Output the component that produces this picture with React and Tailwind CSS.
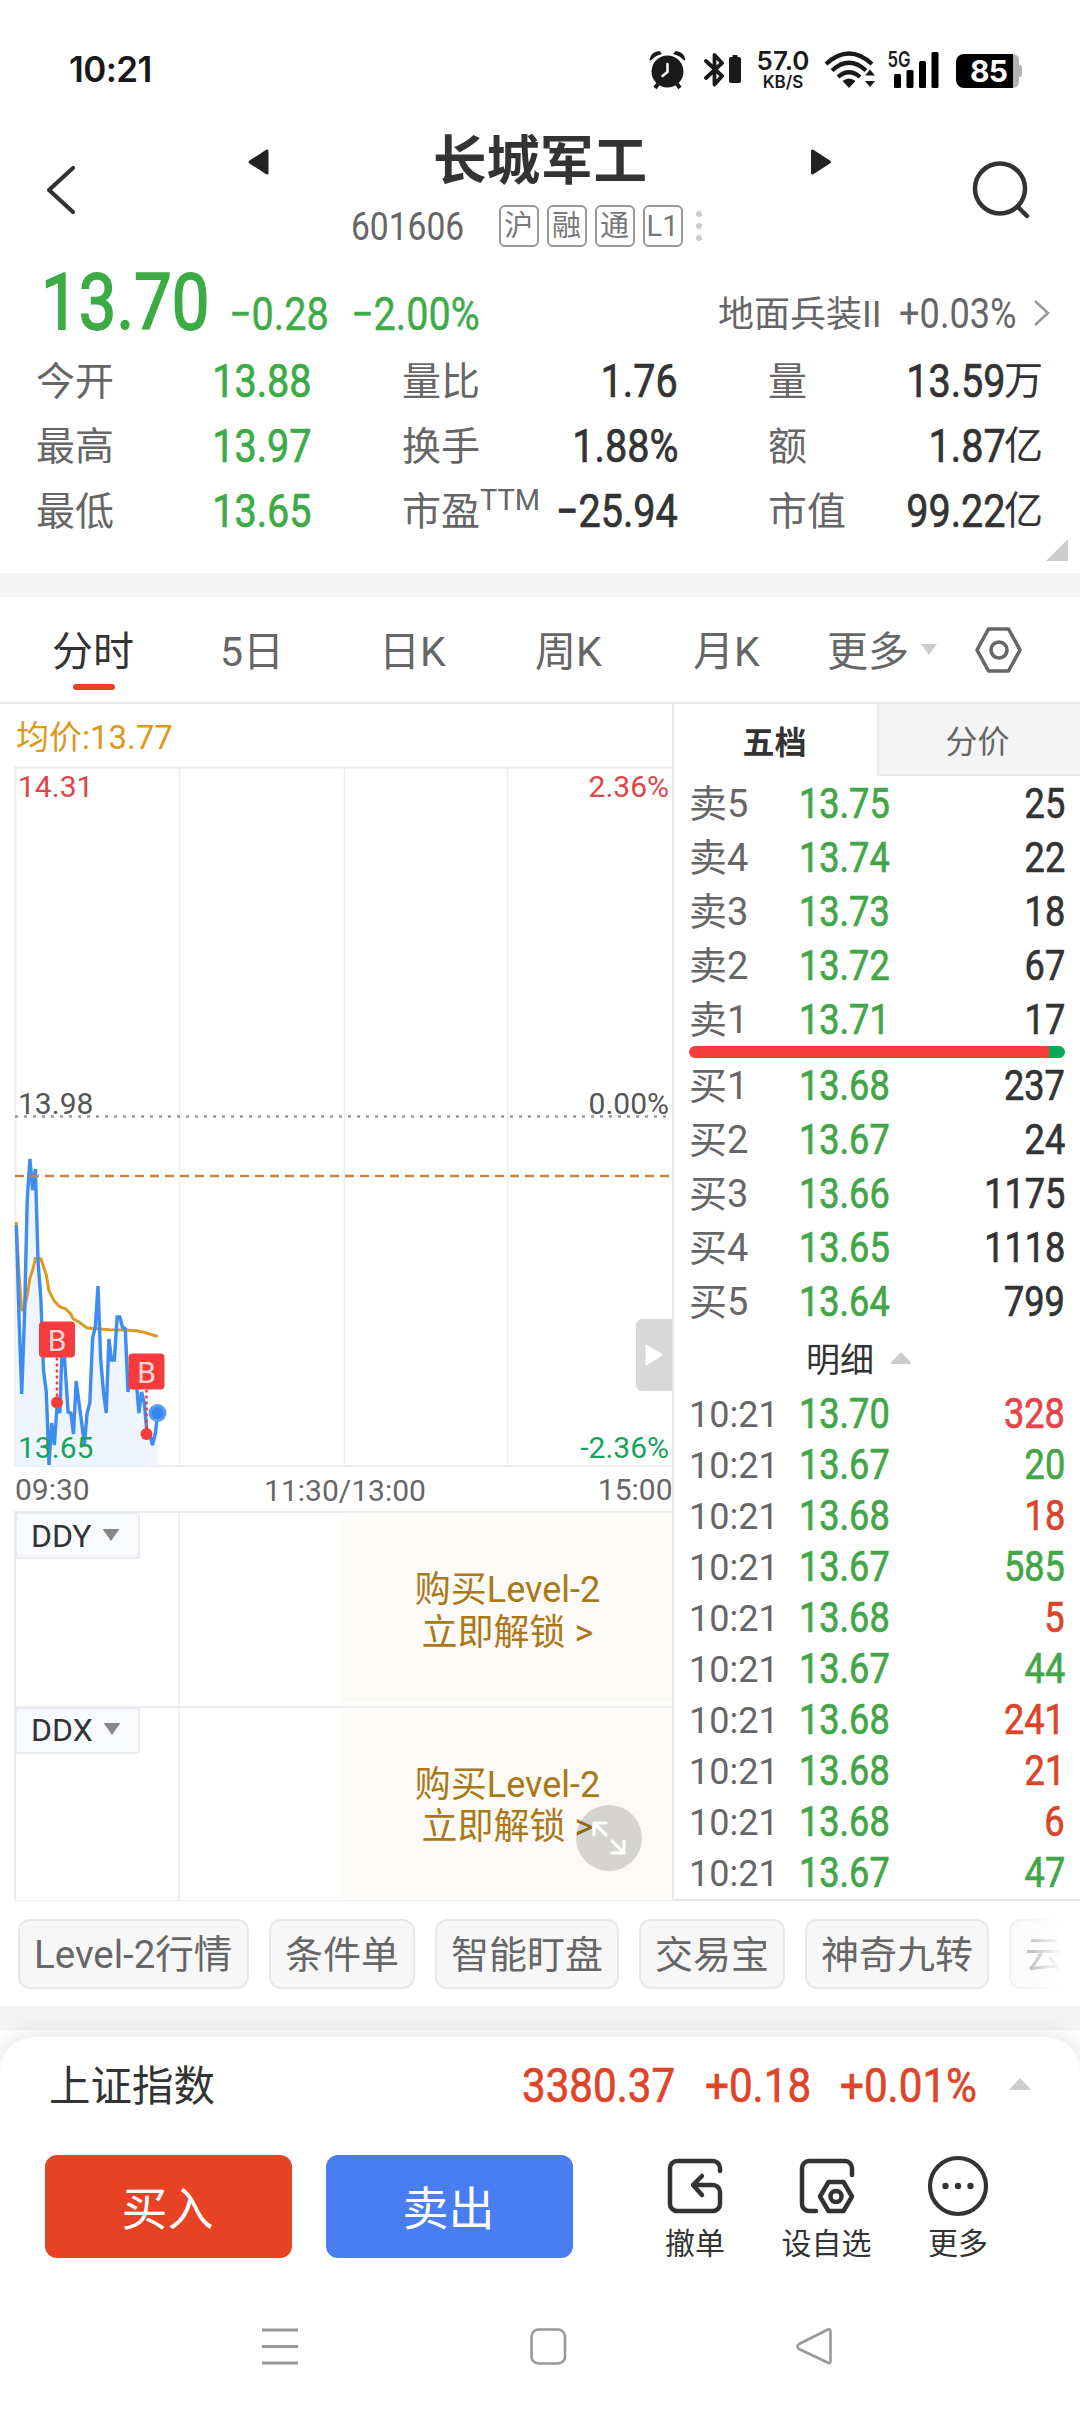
import React from 'react';
import clsx from 'clsx';

// Narrow numerals used for every price and volume
const Num = ({ children, className }) => (
  <span className={clsx('inline-block scale-x-[0.86] whitespace-nowrap leading-none [-webkit-text-stroke:0.7px_currentColor]', className)}>
    {children}
  </span>
);

const StatusBar = () => (
  <div className="flex h-[130px] items-start pl-[69px] pr-[58px] pt-[50px] text-[#1a1a1a]">
    <span className="-mt-px font-['Inter'] text-[35px] font-semibold leading-[40px] tracking-[-0.6px]">10:21</span>
    <div className="ml-auto flex h-10 items-start">
      {/* Alarm */}
      <svg className="h-10 w-[38px]" viewBox="0 0 38 40">
        <circle cx="18.5" cy="21.5" r="16" fill="#1a1a1a" />
        <path d="M0.5 10a10 10 0 0 1 10-9L13 4A20 20 0 0 0 2 10.500ZM36.500 10a10 10 0 0 0-10-9L24 4a20 20 0 0 1 11 6.500Z" fill="#1a1a1a" />
        <path d="M9 34l-3 4M28 34l3 4" stroke="#1a1a1a" strokeWidth="4" />
        <path d="M18.500 14v8l-5 4" fill="none" stroke="#fff" strokeWidth="2.500" strokeLinecap="round" />
      </svg>
      {/* Bluetooth with device battery */}
      <svg className="ml-[17px] h-10 w-[38px]" viewBox="0 0 38 40">
        <path d="M2 11l16 15-7.500 8.500V5L18 13 2 28" fill="none" stroke="#1a1a1a" strokeWidth="3.800" strokeLinejoin="round" strokeLinecap="round" />
        <path d="M28.500 5h5v2H35a2 2 0 0 1 2 2v22a2 2 0 0 1-2 2h-8a2 2 0 0 1-2-2V9a2 2 0 0 1 2-2h1.500Z" fill="#1a1a1a" />
      </svg>
      <div className="-mt-[2px] ml-[12px] flex w-[58px] flex-col items-center font-['Inter'] font-semibold">
        <span className="text-[26px] leading-[26px]">57.0</span>
        <span className="text-[17px] leading-[17px]">KB/S</span>
      </div>
      {/* Wifi */}
      <svg className="ml-[12px] h-10 w-[52px]" viewBox="0 0 52 40">
        <g fill="none" stroke="#1a1a1a" strokeWidth="4.200">
          <path d="M2 14Q25 -7 48 14" />
          <path d="M8 20.500Q25 5 42 20.500" />
          <path d="M14 27Q25 17.500 36 27" />
        </g>
        <path d="M18.500 31Q25 26 31.500 31L25 38ZM41 25.500l5-6 5 6ZM41 31l5 6 5-6Z" fill="#1a1a1a" />
      </svg>
      {/* Cellular signal */}
      <svg className="ml-[11px] h-10 w-[54px] overflow-visible" viewBox="0 0 54 40">
        <text x="0.5" y="17" textLength="23" lengthAdjust="spacingAndGlyphs" fontFamily="Inter, sans-serif" fontSize="21" fontWeight="600" fill="#1a1a1a">5G</text>
        <rect x="7" y="24" width="7" height="14" rx="1.500" />
        <rect x="19.500" y="20" width="7" height="18" rx="1.500" />
        <rect x="32" y="11" width="7" height="27" rx="1.500" />
        <rect x="44.500" y="2" width="7" height="36" rx="1.500" />
      </svg>
      {/* Battery */}
      <div className="ml-[15px] mt-1 flex items-center">
        <div className="flex h-[34px] w-[57px] items-center justify-center rounded-l-[8px] bg-black pl-2 font-['Inter'] text-[30px] font-bold leading-none tracking-[-0.8px] text-white">
          85
        </div>
        <div className="h-[34px] w-[6px] rounded-r-[8px] bg-[#b3b3b3]" />
        <div className="h-[12px] w-[3px] rounded-r-sm bg-[#b3b3b3]" />
      </div>
    </div>
  </div>
);

const badges = ['沪', '融', '通', 'L1'];

const Header = () => (
  <div className="flex h-[120px] items-start">
    <svg className="ml-[43px] mt-[34px] h-[52px] w-9" viewBox="0 0 36 52">
      <path d="M30 4L6 26l24 22" fill="none" stroke="#333" strokeWidth="4.200" strokeLinecap="round" strokeLinejoin="round" />
    </svg>
    <svg className="ml-[168px] mt-[18px] h-7 w-6" viewBox="0 0 24 28">
      <path d="M20 3v22L3 14Z" fill="#222" stroke="#222" strokeWidth="3" strokeLinejoin="round" />
    </svg>
    <div className="flex w-[538px] flex-col items-center pt-[2px]">
      <h1 className="text-[53.500px] font-bold leading-[60px] text-[#333]">长城军工</h1>
      <div className="mt-[13px] flex h-[42px] items-center pr-[28px]">
        <div className="w-[148px] pt-[2px] text-[#666]">
          <Num className="origin-left text-[39px] [-webkit-text-stroke:0px]!">601606</Num>
        </div>
        <div className="flex gap-2">
          {badges.map((badge) => (
            <span key={badge} className="flex h-[42px] w-10 items-center justify-center rounded-[6px] border-2 border-[#999] text-[29px] leading-none text-[#777]">
              {badge}
            </span>
          ))}
        </div>
        <div className="ml-[13px] flex flex-col gap-[6px]">
          <i className="size-[6px] rounded-full bg-[#ccc]" />
          <i className="size-[6px] rounded-full bg-[#ccc]" />
          <i className="size-[6px] rounded-full bg-[#ccc]" />
        </div>
      </div>
    </div>
    <svg className="mt-[18px] h-7 w-6" viewBox="0 0 24 28">
      <path d="M3.500 3v22L20.500 14Z" fill="#222" stroke="#222" strokeWidth="3" strokeLinejoin="round" />
    </svg>
    <svg className="ml-[137px] mt-[28px] size-[64px]" viewBox="0 0 64 64">
      <circle cx="30" cy="30.500" r="25" fill="none" stroke="#333" strokeWidth="4.500" />
      <path d="M48 49l9 9" stroke="#333" strokeWidth="4.500" strokeLinecap="round" />
    </svg>
  </div>
);

const stats = [
  ['今开', '13.88', '量比', '1.76', '量', '13.59', '万'],
  ['最高', '13.97', '换手', '1.88%', '额', '1.87', '亿'],
  ['最低', '13.65', '市盈', '-25.94', '市值', '99.22', '亿'],
];

const Quote = () => (
  <div className="relative h-[323px]">
    <div className="flex h-[97px] items-center text-[#3cab46]">
      <div className="w-[184px] pl-[41px]">
        <Num className="mt-[9px] origin-left text-[78px] [-webkit-text-stroke:1.8px_currentColor]!">13.70</Num>
      </div>
      <div className="flex w-[500px] pl-[45px] pt-[31px] text-[46px]">
        <Num className="w-[122px] origin-left [-webkit-text-stroke:0.4px_currentColor]!">−0.28</Num>
        <Num className="origin-left [-webkit-text-stroke:0.4px_currentColor]!">−2.00%</Num>
      </div>
      <div className="ml-auto flex items-center pr-7 pt-[32px] text-[#666]">
        <span className="mr-[-2px] text-[36px] leading-none">地面兵装II</span>
        <Num className="-mt-[2px] origin-right text-[42px] [-webkit-text-stroke:0px]!">+0.03%</Num>
        <svg className="-mt-[3px] ml-4 h-[30px] w-5" viewBox="0 0 20 30">
          <path d="M3 3l13 12L3 27" fill="none" stroke="#999" strokeWidth="2.500" />
        </svg>
      </div>
    </div>
    {stats.map(([l1, v1, l2, v2, l3, v3, unit]) => (
      <div key={l1} className="flex h-[65px] items-center text-[39px] leading-none text-[#666]">
        <span className="w-[140px] pl-9 pt-[6px]">{l1}</span>
        <div className="flex w-[172px] justify-end pt-[2px] text-[#3cab46]">
          <Num className="origin-right text-[46px]">{v1}</Num>
        </div>
        <span className="ml-[90px] flex w-[140px] pt-[6px]">
          {l2}
          {l2 === '市盈' && <sup className="top-0 -mt-[7px] text-[29px] leading-none">TTM</sup>}
        </span>
        <div className="flex w-[136px] justify-end pt-[2px] text-[#333]">
          <Num className="origin-right text-[46px]">{v2.replace('-', '−')}</Num>
        </div>
        <span className="ml-[90px] w-20 whitespace-nowrap pt-[6px]">{l3}</span>
        <div className="flex w-[195px] items-center justify-end pt-[2px] text-[#333]">
          <Num className="mr-[-2px] origin-right text-[46px]">{v3}</Num>
          <span className="pt-[2px] text-[39px]">{unit}</span>
        </div>
      </div>
    ))}
    <svg className="absolute bottom-3 right-3 size-[22px]" viewBox="0 0 22 22">
      <path d="M22 0v22H0Z" fill="#ccc" />
    </svg>
  </div>
);

const Tabs = () => (
  <div className="flex h-[107px] items-center border-b-2 border-[#e8e8e8] text-[41px] leading-none text-[#666]">
    <div className="relative ml-[52px] w-[168px] pt-[5px] text-[#333]">
      分时
      <div className="absolute left-[21px] top-[57px] h-[6px] w-[42px] rounded-full bg-[#e84123]" />
    </div>
    <span className="w-[159px] pt-[5px]">5日</span>
    <span className="w-[156px] pt-[5px]">日K</span>
    <span className="w-[158px] pt-[5px]">周K</span>
    <span className="w-[134px] pt-[5px]">月K</span>
    <span className="pt-[5px]">更多</span>
    <svg className="ml-[11px] h-3 w-[18px]" viewBox="0 0 18 12">
      <path d="M1 0h16L9 11Z" fill="#ccc" />
    </svg>
    <svg className="ml-[36px] size-[50px]" viewBox="0 0 50 50">
      <path d="M14.500 4h20L46 25 34.500 46h-20L3 25Z" fill="none" stroke="#666" strokeWidth="3.600" strokeLinejoin="round" />
      <circle cx="25" cy="25" r="8" fill="none" stroke="#666" strokeWidth="3.600" />
    </svg>
  </div>
);

// One y value for each trading minute since the open
const minutes = [
  145, 237, 314, 237, 120, 79, 110, 89, 183, 217, 290, 312, 385, 343, 365, 323, 333, 250, 290, 332, 333, 354, 301, 323,
  343, 365, 333, 323, 258, 247, 206, 280, 312, 333, 259, 280, 280, 237, 237, 247, 249, 312, 290, 280, 300, 333, 312, 323,
  354, 354, 365, 354, 333,
].map((y, i) => `${(16.300 + i * 2.724).toFixed(1)},${y + 316}`);

const average =
  '16.3,458 19,510 21.700,546 24,546 27.300,531 30,514 32.700,506 35.300,494.500 41,495 46.300,511 49,527 54.300,537 60,543 65.300,544.500 70.700,550 73.300,555 79,558 87,564 98,564.700 109,565.700 125,566 136,566.700 144,568.300 157.700,572.500';

const Marker = ({ x, y, dotY }) => (
  <g>
    <path d={`M${x} ${y + 36}V${dotY}`} stroke="#f43c3c" strokeWidth="2.500" strokeDasharray="3 3" />
    <circle cx={x} cy={dotY} r="6" fill="#f43c3c" />
    <rect x={x - 18} y={y} width="36" height="36" rx="4" fill="#f43c3c" />
    <text x={x} y={y + 29} textAnchor="middle" fontSize="30" fill="#fbd5d5">B</text>
  </g>
);

const TrendChart = () => (
  <svg className="block h-[747px] w-[672px]" viewBox="0 0 672 747" fontFamily="Roboto, sans-serif">
    <g stroke="#ececec" strokeWidth="2" fill="none">
      <path d="M15 3.500H672M15 702H672" />
      <path d="M15.500 3V702" />
      <path d="M179.500 3V702M344.500 3V702M507.500 3V702" strokeWidth="1.500" stroke="#eee" />
    </g>
    <path d="M15 352.500H670" stroke="#999" strokeWidth="2.500" strokeDasharray="3 6" />
    <polygon points={`16.300,702 ${minutes.join(' ')} 157.700,702`} fill="#eef5fe" />
    <polyline points={average} fill="none" stroke="#dc9a1e" strokeWidth="3" />
    <polyline points={minutes.join(' ')} fill="none" stroke="#3f8cf0" strokeWidth="3.400" />
    <path d="M15 412H670" stroke="#c88440" strokeWidth="2.500" strokeDasharray="9 6" />
    <Marker x={57} y={557.500} dotY={638.500} />
    <Marker x={146.500} y={589.500} dotY={670} />
    <circle cx="157.500" cy="649" r="9" fill="#5b9bf3" />
    <circle cx="157.500" cy="649" r="6" fill="#3587f0" />
    <g fontSize="30">
      <text x="18" y="33" fill="#dd4547">14.31</text>
      <text x="669" y="33" textAnchor="end" fill="#dd4547">2.36%</text>
      <text x="18" y="350" fill="#555">13.98</text>
      <text x="669" y="350" textAnchor="end" fill="#555">0.00%</text>
      <text x="18" y="694" fill="#17a35b">13.65</text>
      <text x="669" y="694" textAnchor="end" fill="#17a35b">-2.36%</text>
      <text x="15" y="736" fill="#666">09:30</text>
      <text x="345" y="737" textAnchor="middle" fill="#666">11:30/13:00</text>
      <text x="672.500" y="736" textAnchor="end" fill="#666">15:00</text>
    </g>
  </svg>
);

const Indicator = ({ name }) => (
  <div className="ml-[14px] flex h-[194.500px] border-l-2 border-t-2 border-[#ececec]">
    <div className="h-full w-[164px] border-r-2 border-[#f0f0f0]">
      <div className="-ml-px -mt-px flex h-[47px] w-[125px] items-center rounded-[3px] border-2 border-[#e9ebee] bg-[#f8faff] pl-[14px] text-[32px] leading-none text-[#333]">
        {name}
        <svg className="-mt-[2px] ml-[10px] h-3 w-[18px]" viewBox="0 0 18 12">
          <path d="M0.500 0h17L9 12Z" fill="#888" />
        </svg>
      </div>
    </div>
    <div className="w-[163px]" />
    <div className="my-[3px] flex flex-1 flex-col items-center justify-center bg-[#fbfaf6] pt-[5px] text-[36px] leading-[42.500px] text-[#ab7819]">
      <span>购买Level-2</span>
      <span>立即解锁 &gt;</span>
    </div>
  </div>
);

const asks = [['卖5', '13.75', 25], ['卖4', '13.74', 22], ['卖3', '13.73', 18], ['卖2', '13.72', 67], ['卖1', '13.71', 17]];
const bids = [['买1', '13.68', 237], ['买2', '13.67', 24], ['买3', '13.66', 1175], ['买4', '13.65', 1118], ['买5', '13.64', 799]];

const trades = [
  ['13.70', 328, 'text-[#e5444a]'],
  ['13.67', 20, 'text-[#42a648]'],
  ['13.68', 18, 'text-[#d9452a]'],
  ['13.67', 585, 'text-[#42a648]'],
  ['13.68', 5, 'text-[#d9452a]'],
  ['13.67', 44, 'text-[#42a648]'],
  ['13.68', 241, 'text-[#d9452a]'],
  ['13.68', 21, 'text-[#d9452a]'],
  ['13.68', 6, 'text-[#d9452a]'],
  ['13.67', 47, 'text-[#42a648]'],
];

const BookRow = ({ label, price, volume }) => (
  <div className="flex h-[54px] items-center px-[15px] pt-[2px] leading-none">
    <span className="w-[110px] text-[38px] text-[#666]">{label}</span>
    <Num className="origin-left text-[42px] text-[#42a648]">{price}</Num>
    <Num className="ml-auto origin-right text-[42px] text-[#333]">{volume}</Num>
  </div>
);

const OrderBook = () => (
  <div className="flex h-[1197px] w-[408px] flex-col border-b-2 border-l-2 border-[#e8e8e8]">
    <div className="flex h-[72px] text-[32px] leading-none">
      <div className="flex w-[203px] items-center justify-center pr-[2px] pt-[6px] font-bold text-[#333]">五档</div>
      <div className="flex flex-1 items-center justify-center border-b-2 border-l-2 border-[#e8e8e8] bg-[#f4f4f4] pr-1 pt-[6px] text-[#666]">分价</div>
    </div>
    {asks.map(([label, price, volume]) => (
      <BookRow key={label} label={label} price={price} volume={volume} />
    ))}
    <div className="ml-[15px] flex h-3 w-[376px] overflow-hidden rounded-full">
      <div className="w-[360px] bg-[#f63d3d]" />
      <div className="flex-1 bg-[#0aa858]" />
    </div>
    {bids.map(([label, price, volume]) => (
      <BookRow key={label} label={label} price={price} volume={volume} />
    ))}
    <div className="flex h-[59px] items-center pl-[132px] pt-[4px] text-[34px] leading-none text-[#333]">
      明细
      <svg className="-mt-[4px] ml-4 h-3 w-[22px]" viewBox="0 0 22 12">
        <path d="M2 11L11 1.500 20 11Z" fill="#ccc" stroke="#ccc" strokeWidth="2" strokeLinejoin="round" />
      </svg>
    </div>
    {trades.map(([price, volume, color], index) => (
      <div key={index} className="flex h-[51px] items-center px-[15px] pt-[2px] leading-none">
        <span className="w-[110px] pt-[3px] text-[36px] text-[#666]">10:21</span>
        <Num className="origin-left text-[42px] text-[#42a648]">{price}</Num>
        <Num className={clsx('ml-auto origin-right text-[42px]', color)}>{volume}</Num>
      </div>
    ))}
  </div>
);

const chips = ['Level-2行情', '条件单', '智能盯盘', '交易宝', '神奇九转', '云'];

const Chips = () => (
  <div className="relative mr-[18px] flex h-[105px] items-center gap-5 overflow-hidden pl-[18px]">
    {chips.map((chip) => (
      <span key={chip} className="flex h-[70px] min-w-[145px] shrink-0 items-center rounded-[12px] border-2 border-[#e8e8e8] bg-[#f7f7f7] px-[14px] pt-[3px] text-[38px] leading-none text-[#666] first:w-[231px] first:text-[38.500px]">
        {chip}
      </span>
    ))}
    <div className="absolute right-0 top-0 h-full w-[64px] bg-gradient-to-r from-white/20 to-white" />
  </div>
);

const BottomSheet = () => (
  <div className="relative h-[375px] rounded-t-[34px] bg-white shadow-[0_0_24px_rgba(0,0,0,0.13)]">
    <div className="flex h-[94px] items-center pl-[49px] leading-none">
      <span className="w-[473px] pt-[6px] text-[41.5px] text-[#333]">上证指数</span>
      <div className="flex pt-[2px] text-[49px] text-[#dd4528]">
        <Num className="w-[183px] origin-left">3380.37</Num>
        <Num className="w-[135px] origin-left">+0.18</Num>
        <Num className="w-[169px] origin-left">+0.01%</Num>
      </div>
      <svg className="h-3 w-[22px]" viewBox="0 0 22 12">
        <path d="M2 11L11 1.500 20 11Z" fill="#ccc" stroke="#ccc" strokeWidth="2" strokeLinejoin="round" />
      </svg>
    </div>
    <div className="mt-6 flex h-[103px] pl-[45px] text-[46px] text-white">
      <button className="mr-[34px] w-[247px] rounded-[12px] bg-[#e84225] pr-[2px] pt-[5px]">买入</button>
      <button className="w-[247px] rounded-[12px] bg-[#4a7df2] pr-[2px] pt-[5px]">卖出</button>
      <div className="ml-[57px] flex text-[30px] leading-none text-[#333]">
        <div className="flex w-[130px] flex-col items-center">
          <svg className="size-[62px] shrink-0" viewBox="0 0 62 62" fill="none" stroke="#333" strokeWidth="4.500" strokeLinecap="round" strokeLinejoin="round">
            <path d="M56 16v-3a7 7 0 0 0-7-7H13a7 7 0 0 0-7 7v36a7 7 0 0 0 7 7h36a7 7 0 0 0 7-7V37a7 7 0 0 0-7-7H29M38 21l-9 9 9 10" />
          </svg>
          <span className="mt-[12px]">撤单</span>
        </div>
        <div className="flex w-[133px] flex-col items-center">
          <svg className="size-[62px] shrink-0" viewBox="0 0 62 62" fill="none" stroke="#333" strokeWidth="4.500" strokeLinecap="round" strokeLinejoin="round">
            <path d="M56 20v-7a7 7 0 0 0-7-7H13a7 7 0 0 0-7 7v36a7 7 0 0 0 7 7h7M32.500 27h15L56 41.500 47.500 56h-15L24 41.500Z" />
            <circle cx="40" cy="41.500" r="5.500" />
          </svg>
          <span className="mt-[12px]">设自选</span>
        </div>
        <div className="flex w-[130px] flex-col items-center">
          <svg className="size-[62px] shrink-0" viewBox="0 0 62 62">
            <circle cx="31" cy="31" r="28" fill="none" stroke="#333" strokeWidth="4.200" />
            <circle cx="18.500" cy="31" r="3.200" fill="#333" />
            <circle cx="31" cy="31" r="3.200" fill="#333" />
            <circle cx="43.500" cy="31" r="3.200" fill="#333" />
          </svg>
          <span className="mt-[12px]">更多</span>
        </div>
      </div>
    </div>
    {/* System navigation */}
    <div className="mt-[68px] flex h-10">
      <svg className="ml-[260px] size-10" viewBox="0 0 40 40">
        <path d="M2 4H38M2 20.500H38M2 37H38" stroke="#999" strokeWidth="2.800" />
      </svg>
      <svg className="ml-[228px] size-10" viewBox="0 0 40 40">
        <rect x="3.500" y="3.500" width="33.500" height="34" rx="7" fill="none" stroke="#999" strokeWidth="2.600" />
      </svg>
      <svg className="ml-[227px] size-10" viewBox="0 0 40 40">
        <path d="M33 3.500Q35.500 2.500 35.500 6V34.500Q35.500 38.500 32.500 36.500L4 23Q1 20.500 4 18Z" fill="none" stroke="#999" strokeWidth="2.600" strokeLinejoin="round" />
      </svg>
    </div>
  </div>
);

const App = () => {
  return (
    <div className="h-[2412px] w-[1080px] overflow-hidden bg-white font-['Roboto','Noto_Sans_CJK_SC',sans-serif]">
      <StatusBar />
      <Header />
      <Quote />
      <div className="h-6 bg-[#f4f4f4]" />
      <Tabs />
      <div className="flex h-[1197px]">
        {/* Intraday chart column */}
        <div className="relative w-[672px]">
          <div className="flex h-[60px] items-center pl-4 pt-[6px] text-[33px] leading-none text-[#dd981c]">均价:13.77</div>
          <TrendChart />
          <Indicator name="DDY" />
          <Indicator name="DDX" />
          <div className="ml-[15px] h-px bg-[#ececec]" />
          <div className="absolute right-0 top-[615px] flex h-[72px] w-9 items-center justify-center rounded-l-[6px] bg-[#d8d8d8]">
            <svg className="h-[22px] w-[18px]" viewBox="0 0 18 22">
              <path d="M1.500 1.500v19L16.500 11Z" fill="#fff" stroke="#fff" strokeWidth="2" strokeLinejoin="round" />
            </svg>
          </div>
          <div className="absolute right-[30px] top-[1101px] flex size-[66px] items-center justify-center rounded-full bg-black/15">
            <svg className="size-9" viewBox="0 0 36 36" fill="none" stroke="#fff" strokeWidth="3.200" strokeLinecap="round" strokeLinejoin="round">
              <path d="M3 15V3h12M3.500 3.500L15 15M33 21v12H21M32.500 32.500L21 21" />
            </svg>
          </div>
        </div>
        <OrderBook />
      </div>
      <Chips />
      <div className="mb-[7px] h-6 bg-[#f3f3f3]" />
      <BottomSheet />
    </div>
  );
};

export default App;
